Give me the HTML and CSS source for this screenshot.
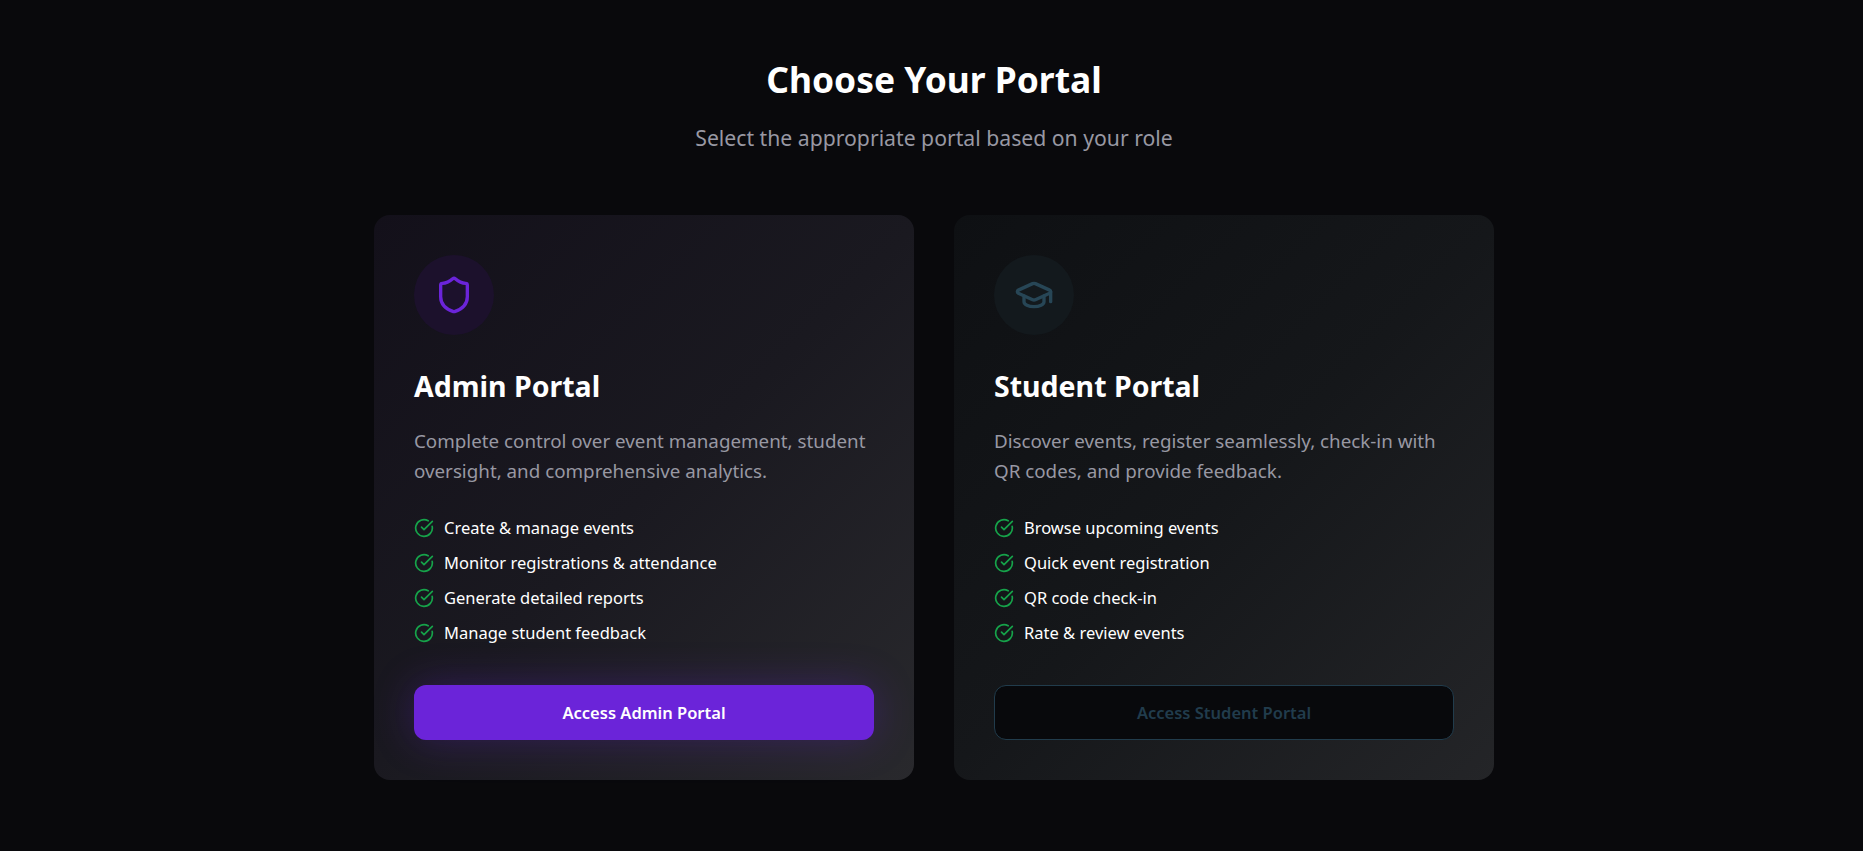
FILE: index.html
```html
<!DOCTYPE html>
<html lang="en">
<head>
<meta charset="utf-8">
<title>Choose Your Portal</title>
<link rel="stylesheet" href="styles.css">
</head>
<body>
<main class="page">
  <header class="head">
    <h1 class="title">Choose Your Portal</h1>
    <p class="subtitle">Select the appropriate portal based on your role</p>
  </header>
  <section class="grid">
    <article class="card card-admin">
      <div class="badge">
        <svg class="badge-icon" viewBox="0 0 24 24"><path d="M20 13c0 5-3.5 7.5-7.66 8.95a1 1 0 0 1-.67-.01C7.5 20.5 4 18 4 13V6a1 1 0 0 1 1-1c2 0 4.5-1.2 6.24-2.72a1.17 1.17 0 0 1 1.52 0C14.51 3.81 17 5 19 5a1 1 0 0 1 1 1z"/></svg>
      </div>
      <h2 class="card-title">Admin Portal</h2>
      <p class="card-text">Complete control over event management, student oversight, and comprehensive analytics.</p>
      <ul class="features">
        <li class="feature"><svg class="check" viewBox="0 0 24 24"><path d="M21.801 10A10 10 0 1 1 17 3.335"/><path d="m9 11 3 3L22 4"/></svg>Create &amp; manage events</li>
        <li class="feature"><svg class="check" viewBox="0 0 24 24"><path d="M21.801 10A10 10 0 1 1 17 3.335"/><path d="m9 11 3 3L22 4"/></svg>Monitor registrations &amp; attendance</li>
        <li class="feature"><svg class="check" viewBox="0 0 24 24"><path d="M21.801 10A10 10 0 1 1 17 3.335"/><path d="m9 11 3 3L22 4"/></svg>Generate detailed reports</li>
        <li class="feature"><svg class="check" viewBox="0 0 24 24"><path d="M21.801 10A10 10 0 1 1 17 3.335"/><path d="m9 11 3 3L22 4"/></svg>Manage student feedback</li>
      </ul>
      <button class="btn" type="button">Access Admin Portal</button>
    </article>
    <article class="card card-student">
      <div class="badge">
        <svg class="badge-icon" viewBox="0 0 24 24"><path d="M21.42 10.922a1 1 0 0 0-.019-1.838L12.83 5.18a2 2 0 0 0-1.66 0L2.6 9.08a1 1 0 0 0 0 1.832l8.57 3.908a2 2 0 0 0 1.66 0z"/><path d="M22 10v6"/><path d="M6 12.5V16a6 3 0 0 0 12 0v-3.5"/></svg>
      </div>
      <h2 class="card-title">Student Portal</h2>
      <p class="card-text">Discover events, register seamlessly, check-in with QR codes, and provide feedback.</p>
      <ul class="features">
        <li class="feature"><svg class="check" viewBox="0 0 24 24"><path d="M21.801 10A10 10 0 1 1 17 3.335"/><path d="m9 11 3 3L22 4"/></svg>Browse upcoming events</li>
        <li class="feature"><svg class="check" viewBox="0 0 24 24"><path d="M21.801 10A10 10 0 1 1 17 3.335"/><path d="m9 11 3 3L22 4"/></svg>Quick event registration</li>
        <li class="feature"><svg class="check" viewBox="0 0 24 24"><path d="M21.801 10A10 10 0 1 1 17 3.335"/><path d="m9 11 3 3L22 4"/></svg>QR code check-in</li>
        <li class="feature"><svg class="check" viewBox="0 0 24 24"><path d="M21.801 10A10 10 0 1 1 17 3.335"/><path d="m9 11 3 3L22 4"/></svg>Rate &amp; review events</li>
      </ul>
      <button class="btn" type="button">Access Student Portal</button>
    </article>
  </section>
</main>
</body>
</html>
```
FILE: styles.css
```css
* { box-sizing: border-box; }
html, body { margin: 0; height: 100%; }
body {
  background: #09090c;
  color: #fff;
  font-family: "Noto Sans", "Open Sans", sans-serif;
  overflow: hidden;
}
.page {
  width: 1120px;
  margin-left: 374px;
  padding-top: 53px;
}
.head { text-align: center; margin-bottom: 62px; }
.title { margin: 0 0 17px; font-size: 35.4px; line-height: 52px; font-weight: 700; }
.subtitle { margin: 0; font-size: 21.2px; line-height: 31px; color: #9898a3; }
.grid { display: grid; grid-template-columns: 540px 540px; gap: 40px; }
.card { height: 565px; padding: 40px; border-radius: 16px; }
.card-admin { background: linear-gradient(135deg, #13101a 0%, #1a1920 50%, #29292d 100%); }
.card-student { background: linear-gradient(135deg, #0e1013 0%, #15171a 50%, #242528 100%); }
.badge {
  width: 80px; height: 80px; border-radius: 50%;
  display: flex; align-items: center; justify-content: center;
  margin-bottom: 30px;
}
.card-admin .badge { background: #1c112c; color: #6b24d9; }
.card-student .badge { background: #13191d; color: #274656; }
.badge-icon { width: 40px; height: 40px; fill: none; stroke: currentColor; stroke-width: 2; stroke-linecap: round; stroke-linejoin: round; }
.card-title { margin: 0 0 19px; font-size: 28.5px; line-height: 42px; font-weight: 700; }
.card-text { margin: 0 0 30px; font-size: 18.8px; line-height: 30px; color: #9898a3; }
.features { margin: 0 0 40px; padding: 0; list-style: none; display: flex; flex-direction: column; gap: 11px; }
.feature { display: flex; align-items: center; gap: 10px; font-size: 16.5px; line-height: 24px; }
.check { width: 20px; height: 20px; flex: none; fill: none; stroke: #16a34a; stroke-width: 2; stroke-linecap: round; stroke-linejoin: round; }
.btn {
  display: block; width: 100%; height: 55px; border-radius: 12px;
  font: 600 16.5px/24px "Noto Sans", "Open Sans", sans-serif;
  cursor: pointer;
}
.card-admin .btn { background: #6b24d9; color: #fff; border: 0; box-shadow: 0 0 40px rgba(107, 36, 217, .3); }
.card-student .btn { background: #08090c; color: #213c4c; border: 1px solid #213c4c; }
```
